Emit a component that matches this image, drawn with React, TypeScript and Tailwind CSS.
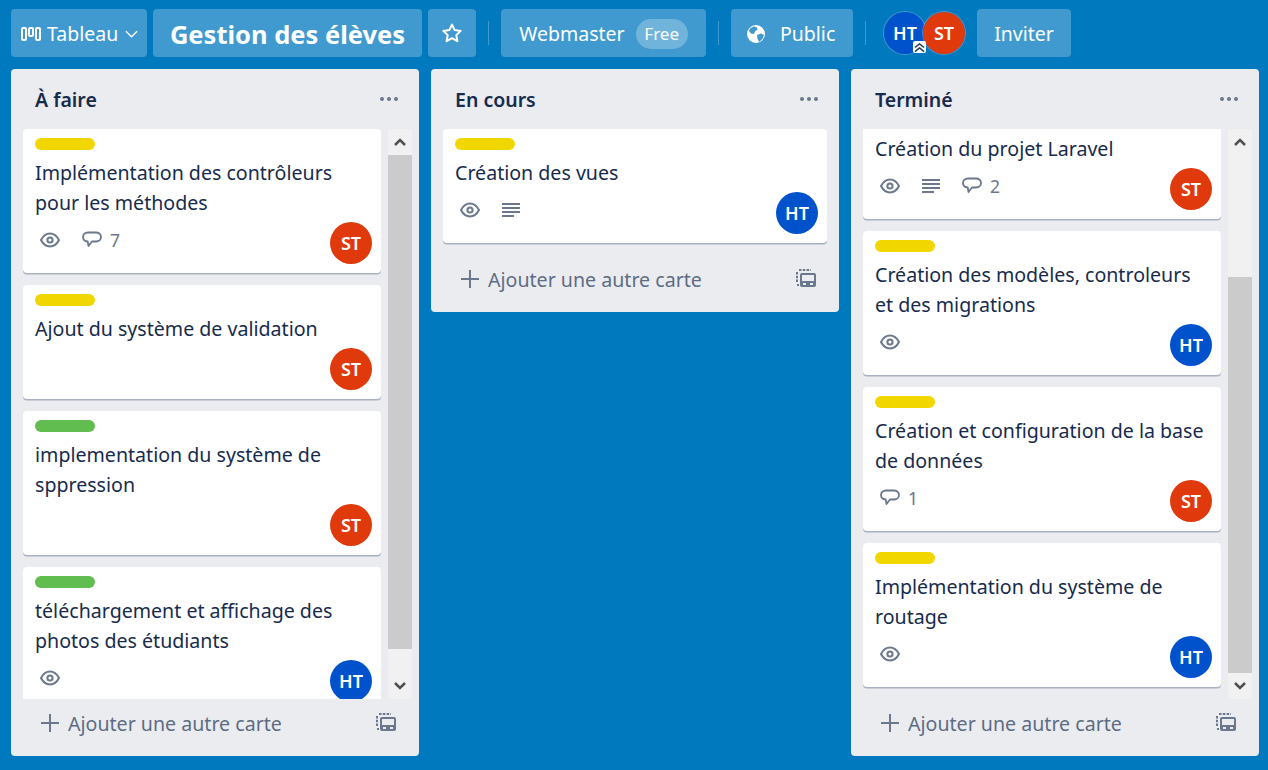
const FONT = "font-['Noto_Sans','Open_Sans',sans-serif]";

type Badge = "eye" | "desc" | number;

interface Card {
  label?: "yellow" | "green";
  title: string[];
  badges: Badge[];
  who: "ST" | "HT";
}

const todo: Card[] = [
  { label: "yellow", title: ["Implémentation des contrôleurs", "pour les méthodes"], badges: ["eye", 7], who: "ST" },
  { label: "yellow", title: ["Ajout du système de validation"], badges: [], who: "ST" },
  { label: "green", title: ["implementation du système de", "sppression"], badges: [], who: "ST" },
  { label: "green", title: ["téléchargement et affichage des", "photos des étudiants"], badges: ["eye"], who: "HT" },
];

const doing: Card[] = [
  { label: "yellow", title: ["Création des vues"], badges: ["eye", "desc"], who: "HT" },
];

const done: Card[] = [
  { title: ["Création du projet Laravel"], badges: ["eye", "desc", 2], who: "ST" },
  { label: "yellow", title: ["Création des modèles, controleurs", "et des migrations"], badges: ["eye"], who: "HT" },
  { label: "yellow", title: ["Création et configuration de la base", "de données"], badges: [1], who: "ST" },
  { label: "yellow", title: ["Implémentation du système de", "routage"], badges: ["eye"], who: "HT" },
];

function BoardIcon() {
  return (
    <svg width="20" height="14" viewBox="0 0 20 14" fill="none" stroke="white" strokeWidth="2">
      <rect x="1" y="1" width="4" height="12" rx="1" />
      <rect x="8" y="1" width="4" height="8" rx="1" />
      <rect x="15" y="1" width="4" height="12" rx="1" />
    </svg>
  );
}

function Star() {
  return (
    <svg width="22" height="22" viewBox="0 0 24 24" fill="none" stroke="white" strokeWidth="2.2" strokeLinejoin="round">
      <path d="M12 2.8l2.9 6 6.6.9-4.8 4.6 1.2 6.6-5.9-3.2-5.900 3.200 1.200-6.600-4.800-4.600 6.600-.9z" />
    </svg>
  );
}

function Globe() {
  return (
    <svg width="20" height="20" viewBox="0 0 20 20">
      <circle cx="10" cy="10" r="9" fill="white" />
      <path d="M4 4.500l3.500-2 3 .5 1 2.500-2.500 2-1 2.500-3-.5-2-2.500zM11 11l4-1.500 3 1.500-1.500 4-3.500 3-1.500-3.500z" fill="#3f99cf" />
    </svg>
  );
}

function Eye() {
  return (
    <svg width="20" height="16" viewBox="0 0 20 16" fill="none" stroke="#6b778c" strokeWidth="2">
      <path d="M1 8c2.300-4.400 5.300-6.500 9-6.500s6.700 2.100 9 6.500c-2.300 4.400-5.300 6.500-9 6.500s-6.700-2.100-9-6.500z" />
      <circle cx="10" cy="8" r="2.600" />
    </svg>
  );
}

function Lines() {
  return (
    <svg width="18" height="16" viewBox="0 0 18 16" fill="#6b778c">
      <rect x="0" y="1" width="18" height="2" />
      <rect x="0" y="5" width="18" height="2" />
      <rect x="0" y="9" width="18" height="2" />
      <rect x="0" y="13" width="12" height="2" />
    </svg>
  );
}

function Comment() {
  return (
    <svg width="20" height="18" viewBox="0 0 20 18" fill="none" stroke="#6b778c" strokeWidth="1.800" strokeLinejoin="round">
      <path d="M6 1.500h8c2.800 0 5 1.700 5 4.500s-2.200 4.500-5 4.500h-4l-3.500 4.500-.8-4.500C3 10.300 1 8.600 1 6s2.200-4.500 5-4.500z" />
    </svg>
  );
}

function Template() {
  return (
    <svg width="20" height="19" viewBox="0 0 20 19" fill="none">
      <path d="M3 1h12M1 3v11M1 16h2" stroke="#6b778c" strokeWidth="2" strokeDasharray="2.500 1.300" />
      <rect x="4" y="4" width="16" height="14" rx="2" fill="#6b778c" />
      <rect x="6" y="6" width="12" height="6" fill="#ebecf0" />
      <rect x="7" y="14" width="3" height="2" fill="#ebecf0" />
      <rect x="14" y="14" width="3" height="2" fill="#ebecf0" />
    </svg>
  );
}

function Avatar({ who }: { who: "ST" | "HT" }) {
  return (
    <div
      className={`flex h-[42px] w-[42px] shrink-0 items-center justify-center rounded-full text-[18px] font-semibold text-white ${
        who === "ST" ? "bg-[#e0390b]" : "bg-[#0052cc]"
      }`}
    >
      {who}
    </div>
  );
}

function CardView({ card }: { card: Card }) {
  return (
    <div className="relative w-full shrink-0 rounded-[4px] bg-white px-3 pb-[9px] pt-[9px] shadow-[0_1.5px_0_#a9b0c1]">
      {card.label ? (
        <div className={`mb-2 h-3 w-[60px] rounded-full ${card.label === "yellow" ? "bg-[#f2d600]" : "bg-[#61bd4f]"}`} />
      ) : null}
      {card.title.map((line) => (
        <div key={line} className="h-[30px] whitespace-nowrap text-[19.6px] leading-[30px] text-[#172b4d]">
          {line}
        </div>
      ))}
      <div className="mt-1 flex items-start justify-between">
        <div className="flex h-9 items-center gap-[22px] pl-[5px]">
          {card.badges.map((b) =>
            b === "eye" ? (
              <Eye key="eye" />
            ) : b === "desc" ? (
              <Lines key="desc" />
            ) : (
              <div key="count" className="flex items-center gap-2 text-[17.5px] text-[#6b778c]">
                <Comment />
                <span>{b}</span>
              </div>
            ),
          )}
        </div>
        <div className="-mr-[3px]">
          <Avatar who={card.who} />
        </div>
      </div>
    </div>
  );
}

function ScrollTrack({ top, height }: { top: string; height: string }) {
  return (
    <div className="relative ml-[7px] w-[24px] shrink-0 bg-[#f1f1f1]">
      <svg className="absolute left-[6px] top-[9px]" width="12" height="8" viewBox="0 0 12 8" fill="none" stroke="#505050" strokeWidth="2.500">
        <path d="M1 7l5-5 5 5" />
      </svg>
      <div className={`absolute left-0 w-[24px] bg-[#cbcbcb] ${top} ${height}`} />
      <svg className="absolute bottom-[9px] left-[6px]" width="12" height="8" viewBox="0 0 12 8" fill="none" stroke="#505050" strokeWidth="2.500">
        <path d="M1 1l5 5 5-5" />
      </svg>
    </div>
  );
}

function Column({
  title,
  cards,
  scroll,
  bottomAligned,
}: {
  title: string;
  cards: Card[];
  scroll?: { top: string; height: string };
  bottomAligned?: boolean;
}) {
  return (
    <section className={`flex w-[408px] flex-col rounded-[4px] bg-[#ebecf0] ${scroll ? "h-[687px]" : ""}`}>
      <div className="flex h-[60px] shrink-0 items-center justify-between pl-6 pr-[21px]">
        <h2 className="pt-[2px] text-[19.5px] font-semibold text-[#172b4d]">{title}</h2>
        <div className="flex gap-[3px]">
          <span className="h-1 w-1 rounded-full bg-[#6b778c]" />
          <span className="h-1 w-1 rounded-full bg-[#6b778c]" />
          <span className="h-1 w-1 rounded-full bg-[#6b778c]" />
        </div>
      </div>
      <div className={`flex min-h-0 pl-3 ${scroll ? "h-[570px]" : "pr-3"}`}>
        <div
          className={`flex flex-col gap-3 overflow-hidden ${scroll ? "w-[358px]" : "w-full pb-3"} ${
            bottomAligned ? "justify-end pb-3" : ""
          }`}
        >
          {cards.map((c) => (
            <CardView key={c.title[0]} card={c} />
          ))}
        </div>
        {scroll ? <ScrollTrack top={scroll.top} height={scroll.height} /> : null}
      </div>
      <div className="flex h-[57px] shrink-0 items-center justify-between pb-2 pl-[29px] pr-[23px]">
        <div className="flex items-center gap-2 text-[19.6px] text-[#5e6c84]">
          <svg width="20" height="20" viewBox="0 0 20 20" stroke="#6b778c" strokeWidth="2">
            <path d="M10 1v18M1 10h18" />
          </svg>
          <span>Ajouter une autre carte</span>
        </div>
        <div className="-mt-[2px]">
          <Template />
        </div>
      </div>
    </section>
  );
}

function Sep() {
  return <div className="mx-3 h-6 w-px bg-white/25" />;
}

const btn = "flex h-12 items-center rounded-[4px] bg-white/25 text-[19.5px] text-white";

export default function App() {
  return (
    <main className={`h-screen overflow-hidden bg-[#0079bf] pl-[11px] pt-[9px] ${FONT}`}>
      <header className="flex items-center">
        <button className={`${btn} w-[136px] pl-[10px] pt-[2px]`}>
          <BoardIcon />
          <span className="ml-[6px]">Tableau</span>
          <svg className="ml-[7px]" width="13" height="8" viewBox="0 0 14 8" fill="none" stroke="white" strokeWidth="1.500">
            <path d="M1 1l6 6 6-6" />
          </svg>
        </button>
        <button className={`${btn} ml-[6px] w-[269px] justify-center pt-[2px] !text-[25.5px] font-bold`}>Gestion des élèves</button>
        <button className={`${btn} ml-[6px] w-12 justify-center`}>
          <Star />
        </button>
        <Sep />
        <button className={`${btn} w-[205px] justify-center gap-[11px] pt-[2px]`}>
          <span>Webmaster</span>
          <span className="flex h-[30px] w-[52px] items-center justify-center rounded-full bg-white/25 text-[17px]">Free</span>
        </button>
        <Sep />
        <button className={`${btn} w-[122px] gap-[14px] pl-[15px] pt-[2px]`}>
          <Globe />
          <span>Public</span>
        </button>
        <Sep />
        <div className="ml-[6px] flex">
          <div className="relative rounded-full shadow-[0_0_0_1px_rgba(255,255,255,0.25)]">
            <Avatar who="HT" />
            <div className="absolute bottom-[1px] right-0 z-20 flex h-[12px] w-[13px] items-center justify-center rounded-[2px] bg-white">
              <svg width="11" height="11" viewBox="0 0 12 12" fill="none" stroke="#253858" strokeWidth="1.600">
                <path d="M1 6l5-4 5 4M1 10.500l5-4 5 4" />
              </svg>
            </div>
          </div>
          <div className="relative z-10 -ml-[3px] rounded-full shadow-[0_0_0_1px_rgba(255,255,255,0.25)]">
            <Avatar who="ST" />
          </div>
        </div>
        <button className={`${btn} ml-3 w-[94px] justify-center pt-[2px]`}>Inviter</button>
      </header>
      <div className="mt-3 flex items-start gap-3">
        <Column title="À faire" cards={todo} scroll={{ top: "top-[26px]", height: "h-[494px]" }} />
        <Column title="En cours" cards={doing} />
        <Column title="Terminé" cards={done} scroll={{ top: "top-[148px]", height: "h-[396px]" }} bottomAligned />
      </div>
    </main>
  );
}
